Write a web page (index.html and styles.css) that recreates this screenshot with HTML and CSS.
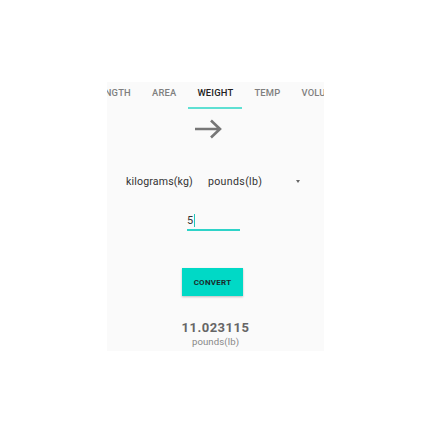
FILE: index.html
```html
<!DOCTYPE html>
<html>
<head>
<meta charset="utf-8">
<link rel="stylesheet" href="styles.css">
</head>
<body>
<div class="screen">
  <div class="tabs">
    <div class="tab first">LENGTH</div>
    <div class="tab">AREA</div>
    <div class="tab active">WEIGHT</div>
    <div class="tab">TEMP</div>
    <div class="tab">VOLUME</div>
  </div>
  <svg class="arrow" width="28" height="20" viewBox="0 0 28 20">
    <path d="M1 10 H26 M17 1.5 L26 10 L17 18.5" fill="none" stroke="#777" stroke-width="2.6"/>
  </svg>
  <div class="spinners">
    <span class="from">kilograms(kg)</span>
    <span class="to">pounds(lb)</span>
    <span class="caret"></span>
  </div>
  <div class="input"><span class="val">5</span><span class="cursor"></span></div>
  <div class="btn">CONVERT</div>
  <div class="result">11.023115</div>
  <div class="unit">pounds(lb)</div>
</div>
</body>
</html>
```
FILE: styles.css
```css
html, body {
  margin: 0;
  padding: 0;
  background: #ffffff;
}
body {
  font-family: Roboto, "Liberation Sans", sans-serif;
}
.screen {
  width: 217px;
  height: 269px;
  margin: 82px 0 0 107px;
  background: #fafafa;
  overflow: hidden;
  display: flex;
  flex-direction: column;
}
.tabs {
  display: flex;
  flex-shrink: 0;
  height: 27px;
  gap: 3px;
}
.tab {
  flex-shrink: 0;
  box-sizing: border-box;
  height: 27px;
  padding: 1px 9px 0;
  line-height: 20px;
  font-size: 9.4px;
  letter-spacing: 0.2px;
  font-weight: 500;
  color: #7f7f7f;
  white-space: nowrap;
}
.tab.first {
  margin-left: -22px;
}
.tab.active {
  color: #222;
  border-bottom: 2px solid #5fe0d3;
}
.arrow {
  display: block;
  margin: 10px 0 0 87px;
}
.spinners {
  display: flex;
  align-items: center;
  height: 16px;
  margin-top: 34px;
  font-size: 10.6px;
  letter-spacing: 0.15px;
  color: #333;
}
.from {
  margin-left: 19px;
}
.to {
  margin-left: 15px;
  letter-spacing: 0.35px;
}
.caret {
  width: 0;
  height: 0;
  border-left: 2.5px solid transparent;
  border-right: 2.5px solid transparent;
  border-top: 3px solid #666;
  margin-left: 34px;
}
.input {
  display: flex;
  align-items: center;
  width: 53px;
  height: 17px;
  margin: 23px 0 0 80px;
  border-bottom: 2px solid #2ed3c8;
  font-size: 11px;
  color: #333;
}
.cursor {
  width: 1.5px;
  height: 13px;
  background: #21c7bb;
  margin-left: 0.5px;
}
.btn {
  width: 61px;
  height: 28px;
  margin: 37px 0 0 75px;
  background: #00d9c6;
  box-shadow: 0 1px 2px rgba(0,0,0,0.25);
  display: flex;
  align-items: center;
  justify-content: center;
  font-size: 8px;
  font-weight: 700;
  letter-spacing: 0.25px;
  color: #1b2b2b;
}
.result {
  margin-top: 24px;
  text-align: center;
  line-height: 15px;
  font-size: 13px;
  font-weight: 700;
  letter-spacing: 0.5px;
  color: #666;
}
.unit {
  margin-top: 1px;
  text-align: center;
  line-height: 12px;
  font-size: 9.6px;
  letter-spacing: 0.1px;
  color: #888;
}
```
